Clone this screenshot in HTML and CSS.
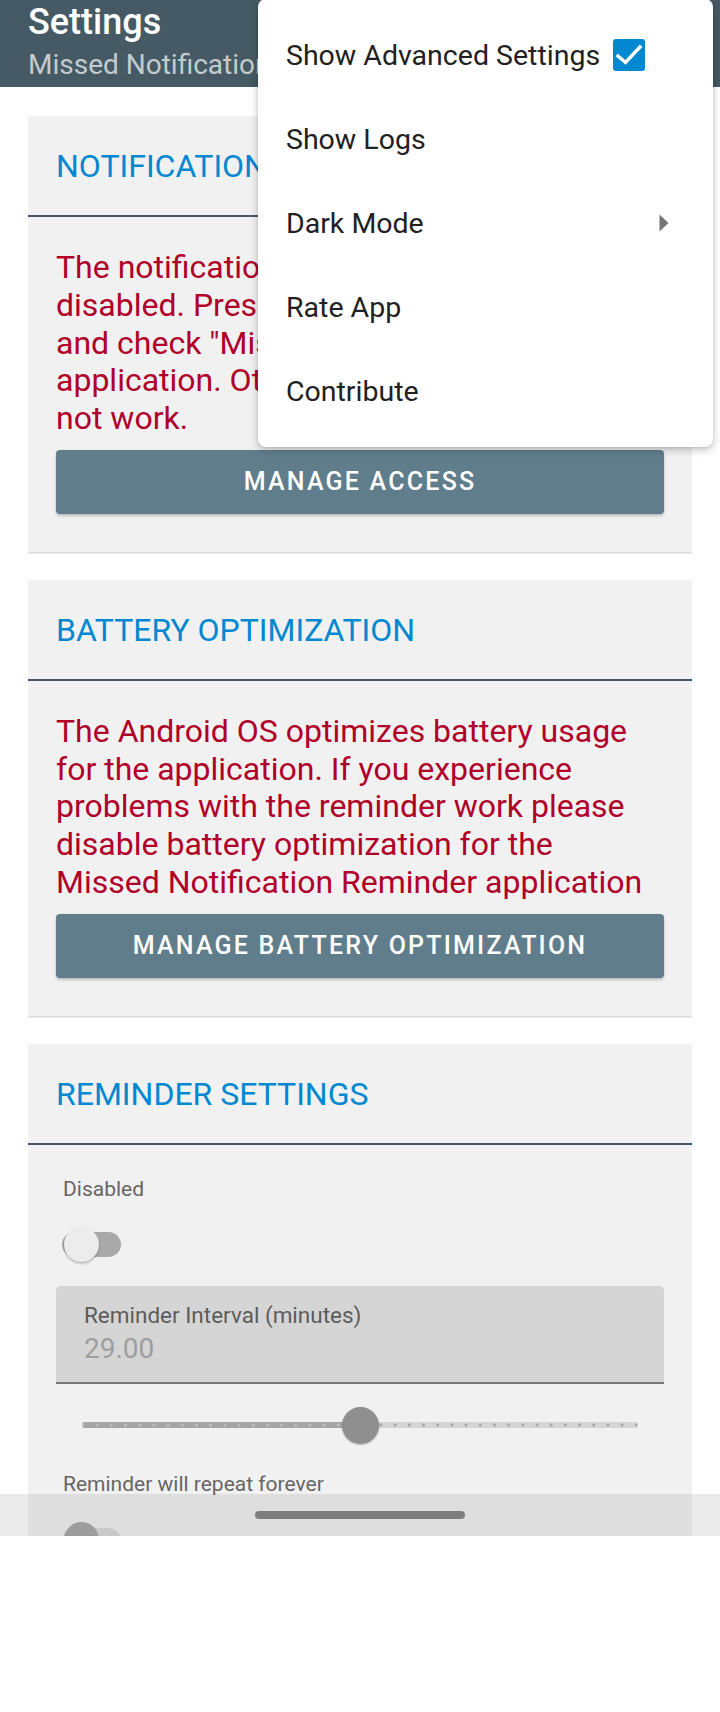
FILE: index.html
```html
<!DOCTYPE html>
<html lang="en">
<head>
<meta charset="utf-8">
<title>Settings</title>
<link rel="stylesheet" href="styles.css">
</head>
<body>
<div class="screen">
  <header class="appbar">
    <div class="appbar-title">Settings</div>
    <div class="appbar-subtitle">Missed Notification Reminder</div>
  </header>

  <main class="content">
    <section class="card">
      <div class="card-head"><h2 class="card-title">NOTIFICATION ACCESS</h2></div>
      <div class="card-body">
        <p class="warning">The notification access permission is disabled. Press "Manage access" button and check "Missed Notification Reminder" application. Otherwise the reminder will not work.</p>
        <button class="action">Manage access</button>
      </div>
    </section>

    <section class="card">
      <div class="card-head"><h2 class="card-title">BATTERY OPTIMIZATION</h2></div>
      <div class="card-body">
        <p class="warning">The Android OS optimizes battery usage for the application. If you experience problems with the reminder work please disable battery optimization for the Missed Notification Reminder application</p>
        <button class="action">Manage battery optimization</button>
      </div>
    </section>

    <section class="card">
      <div class="card-head"><h2 class="card-title">REMINDER SETTINGS</h2></div>
      <div class="card-body card-body-form">
        <p class="field-label">Disabled</p>
        <div class="switch"><span class="switch-track"></span><span class="switch-thumb"></span></div>

        <div class="textfield">
          <div class="textfield-label">Reminder Interval (minutes)</div>
          <div class="textfield-value">29.00</div>
        </div>

        <div class="slider">
          <div class="slider-track"></div>
          <div class="slider-active" style="width:278px"></div>
          <div class="slider-thumb" style="left:259.5px"></div>
        </div>

        <p class="field-label field-label-gap">Reminder will repeat forever</p>
        <div class="switch switch-off"><span class="switch-track"></span><span class="switch-thumb"></span></div>
      </div>
    </section>
  </main>

  <div class="navbar"><span class="nav-handle"></span></div>

  <nav class="menu">
    <div class="menu-item">
      <span>Show Advanced Settings</span>
      <svg class="checkbox" width="32" height="32" viewBox="0 0 32 32" aria-hidden="true">
        <rect x="0" y="0" width="32" height="32" rx="3" fill="#0288d1"/>
        <path d="M5 17 L12.5 23.5 L27 8" fill="none" stroke="#fff" stroke-width="3.4" stroke-linecap="square" stroke-linejoin="miter"/>
      </svg>
    </div>
    <div class="menu-item">Show Logs</div>
    <div class="menu-item menu-item-sub">
      <span>Dark Mode</span>
      <svg class="submenu-arrow" width="10" height="18" viewBox="0 0 10 18" aria-hidden="true">
        <path d="M0.5 0.5 L9.5 9 L0.5 17.5 Z" fill="#757575"/>
      </svg>
    </div>
    <div class="menu-item">Rate App</div>
    <div class="menu-item">Contribute</div>
  </nav>
</div>
</body>
</html>
```

FILE: styles.css
```css
* {
  box-sizing: border-box;
}

html,
body {
  margin: 0;
  padding: 0;
  background: #ffffff;
}

body {
  width: 720px;
  height: 1712px;
  overflow: hidden;
  font-family: Roboto, "Noto Sans", "Liberation Sans", sans-serif;
}

.screen {
  position: relative;
  height: 1536px;
  overflow: hidden;
  background: #ffffff;
}

/* ---------- App bar ---------- */
.appbar {
  height: 87px;
  background: #455a64;
  padding: 1px 28px 0;
}

.appbar-title {
  font-size: 36px;
  line-height: 42px;
  font-weight: 500;
  color: #ffffff;
}

.appbar-subtitle {
  margin-top: 5px;
  font-size: 28px;
  line-height: 33px;
  color: rgba(255, 255, 255, 0.7);
  white-space: nowrap;
}

/* ---------- Content ---------- */
.content {
  display: flex;
  flex-direction: column;
  gap: 28px;
  padding: 29px 28px 0;
}

.card {
  background: #f1f1f1;
  box-shadow: 0 1.5px 0 #dadada;
}

.card-head {
  padding: 32px 28px 30px;
  border-bottom: 2px solid #455a64;
}

.card-title {
  margin: 0;
  font-size: 32px;
  line-height: 37px;
  font-weight: 400;
  color: #0288d1;
  white-space: nowrap;
}

.card-body {
  padding: 32px 28px 38px;
}

.warning {
  margin: 0 4px 12px 0;
  font-size: 32px;
  line-height: 37.75px;
  color: #b0002a;
}

.action {
  display: block;
  width: 100%;
  height: 64px;
  border: 0;
  border-radius: 4px;
  background: #607d8b;
  color: #ffffff;
  font-family: inherit;
  font-size: 25px;
  font-weight: 500;
  letter-spacing: 0.089em;
  text-transform: uppercase;
  box-shadow: 0 2px 3px rgba(0, 0, 0, 0.22);
}

/* ---------- Reminder form ---------- */
.card-body-form {
  padding-bottom: 0;
}

.field-label {
  margin: 0;
  padding-left: 7px;
  font-size: 21px;
  line-height: 24.6px;
  color: #666666;
}

.field-label-gap {
  margin-top: 28.5px;
}

.switch {
  position: relative;
  width: 60px;
  height: 36px;
  margin: 25.5px 0 0 6px;
}

.switch-track {
  position: absolute;
  left: 0;
  top: 5.5px;
  width: 59px;
  height: 25px;
  border-radius: 12.5px;
  background: #a9a9a9;
}

.switch-thumb {
  position: absolute;
  left: 2px;
  top: 0;
  width: 35px;
  height: 35px;
  border-radius: 50%;
  background: #ececec;
  box-shadow: 0 1.5px 2.5px rgba(0, 0, 0, 0.28);
}

.switch-off .switch-track {
  background: #dbdbdb;
}

.switch-off .switch-thumb {
  background: #ababab;
  box-shadow: none;
}

.textfield {
  margin-top: 23px;
  padding: 16px 28px 17px;
  background: #d5d5d5;
  border-radius: 5px 5px 0 0;
  border-bottom: 2px solid #777777;
}

.textfield-label {
  font-size: 22.5px;
  line-height: 26.4px;
  color: #5c5c5c;
}

.textfield-value {
  margin-top: 3.6px;
  font-size: 28px;
  line-height: 33px;
  color: #9e9e9e;
}

.slider {
  position: relative;
  height: 37px;
  margin: 23px 26px 0;
}

.slider-track,
.slider-active {
  position: absolute;
  left: 0;
  top: 15.5px;
  height: 6px;
  border-radius: 3px;
  background-repeat: repeat-x;
  background-size: 14.2px 6px;
  background-position: -6.1px 0;
}

.slider-track {
  right: 0;
  background-color: #d5d5d5;
  background-image: radial-gradient(circle, #ababab 1.4px, transparent 1.9px);
}

.slider-active {
  background-color: #a5a5a5;
  background-image: radial-gradient(circle, #bdbdbd 1.4px, transparent 1.9px);
}

.slider-thumb {
  position: absolute;
  top: 0;
  width: 37px;
  height: 37px;
  border-radius: 50%;
  background: #8f8f8f;
  box-shadow: 0 1px 2px rgba(0, 0, 0, 0.25);
}

/* ---------- System navigation bar ---------- */
.navbar {
  position: absolute;
  left: 0;
  top: 1494px;
  width: 720px;
  height: 42px;
  background: rgba(0, 0, 0, 0.08);
  display: flex;
  justify-content: center;
  padding-top: 17px;
}

.nav-handle {
  display: block;
  width: 210px;
  height: 8px;
  border-radius: 4px;
  background: #7d7d7d;
}

/* ---------- Overflow menu ---------- */
.menu {
  position: absolute;
  left: 258px;
  top: -1px;
  width: 455px;
  padding: 14px 0;
  background: #ffffff;
  border-radius: 8px;
  box-shadow: 0 3px 10px rgba(0, 0, 0, 0.22), 0 1px 3px rgba(0, 0, 0, 0.12);
}

.menu-item {
  display: flex;
  align-items: center;
  gap: 13px;
  height: 84px;
  padding-left: 28px;
  font-size: 28.5px;
  color: #212121;
  white-space: nowrap;
}

.menu-item-sub {
  padding-right: 44px;
}

.submenu-arrow {
  margin-left: auto;
}

.checkbox {
  flex: none;
}
```
